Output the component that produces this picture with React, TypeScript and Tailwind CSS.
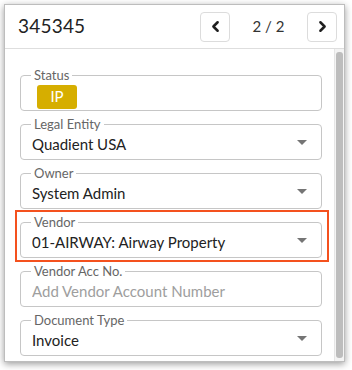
import { ChevronLeft, ChevronRight } from 'lucide-react'

interface FieldProps {
  label: string
  value?: string
  placeholder?: string
  select?: boolean
  highlight?: boolean
  children?: React.ReactNode
}

function Caret() {
  return (
    <svg width="10" height="5" viewBox="0 0 10 5" className="shrink-0">
      <path d="M0 0 L10 0 L5 5 Z" fill="#757575" />
    </svg>
  )
}

function Field({ label, value, placeholder, select, highlight, children }: FieldProps) {
  return (
    <div className="relative">
      {highlight && (
        <div className="absolute -top-[12px] -bottom-[4px] -left-[5px] -right-[7px] border-2 border-[#f4511e] pointer-events-none" />
      )}
      <div className="relative h-[36px] rounded-[4px] border border-[#c6c6c6] flex items-center pl-[11px] pr-[14px]">
        <span className="absolute left-[10px] -top-[9px] px-[3px] bg-white text-[13px] leading-[16px] text-[#666]">
          {label}
        </span>
        {children ? (
          children
        ) : (
          <span
            className={`flex-1 text-[15px] leading-[20px] pt-[3px] truncate ${
              value ? 'text-[#222]' : 'text-[#9e9e9e]'
            }`}
          >
            {value || placeholder}
          </span>
        )}
        {select && <Caret />}
      </div>
    </div>
  )
}

export default function App() {
  return (
    <div className="w-[352px] h-[370px] bg-white p-[4px]" style={{ fontFamily: 'Lato, "Noto Sans", sans-serif' }}>
      <div className="w-[341px] h-[358px] border border-[#bdbdbd] bg-white shadow-[0_2px_7px_rgba(0,0,0,0.4)] flex flex-col overflow-hidden">
        <div className="h-[44px] border-b border-[#dedede] flex items-center pl-[13px] pr-[7px] shrink-0">
          <h1 className="flex-1 text-[19px] text-[#222] tracking-[0.2px]">345345</h1>
          <div className="flex items-center">
            <button className="w-[30px] h-[30px] rounded-[4px] border border-[#dcdcdc] flex items-center justify-center text-[#1f1f1f]">
              <ChevronLeft size={17} strokeWidth={3.5} />
            </button>
            <span className="w-[77px] text-center text-[15px] text-[#333]">2 / 2</span>
            <button className="w-[30px] h-[30px] rounded-[4px] border border-[#dcdcdc] flex items-center justify-center text-[#1f1f1f]">
              <ChevronRight size={17} strokeWidth={3.5} />
            </button>
          </div>
        </div>
        <div className="flex flex-1 min-h-0">
          <div className="flex-1 pl-[15px] pr-[12px] pt-[26px] flex flex-col gap-[13px]">
            <Field label="Status">
              <span className="w-[40px] h-[24px] mt-[7px] ml-[5px] rounded-[3px] bg-[#d6ae00] text-white text-[15px] flex items-center justify-center">
                IP
              </span>
            </Field>
            <Field label="Legal Entity" value="Quadient USA" select />
            <Field label="Owner" value="System Admin" select />
            <Field label="Vendor" value="01-AIRWAY: Airway Property" select highlight />
            <Field label="Vendor Acc No." placeholder="Add Vendor Account Number" />
            <Field label="Document Type" value="Invoice" select />
          </div>
          <div className="w-[10px] border-l border-[#e6e6e6] bg-[#f4f4f4] pt-[3px] flex justify-center shrink-0">
            <div className="w-[7px] h-[306px] rounded-[3px] bg-[#bdbdbd]" />
          </div>
        </div>
      </div>
    </div>
  )
}
